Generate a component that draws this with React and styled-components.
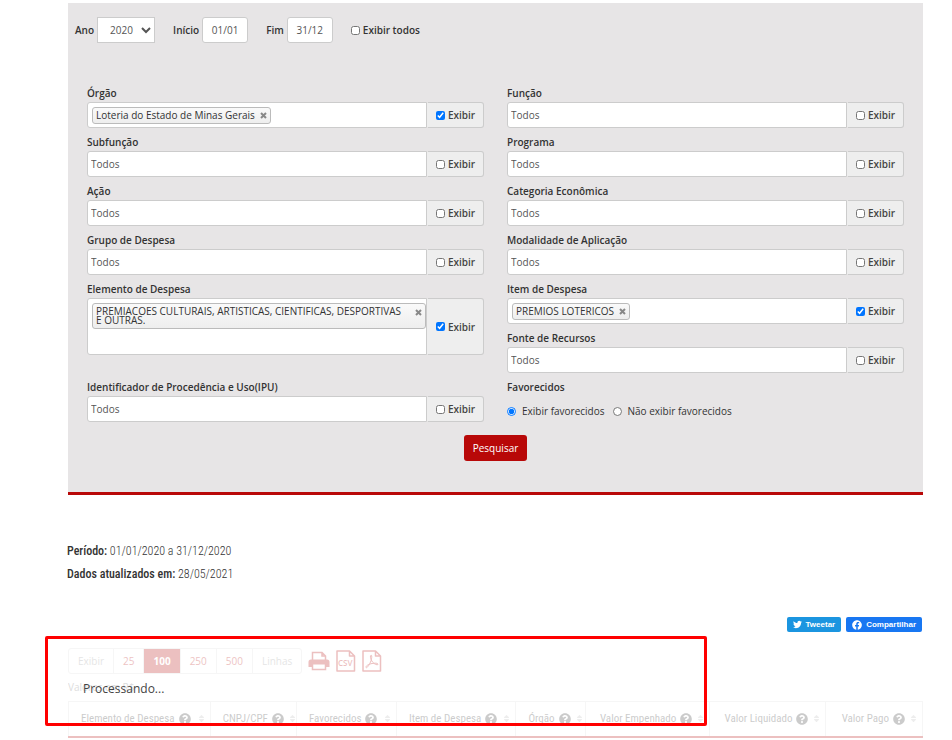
import React from "react";
import styled, { createGlobalStyle, css } from "styled-components";
import { FaQuestionCircle, FaSort, FaTwitter, FaFacebook } from "react-icons/fa";

const RED = "#b80808";

const GlobalStyle = createGlobalStyle`
  * { box-sizing: border-box; }
  body {
    margin: 0;
    background: #fff;
    color: #333;
    font-family: "Open Sans", "Noto Sans", sans-serif;
    font-size: 10px;
  }
  button, input, select { font: inherit; color: inherit; }
`;

const Page = styled.main`
  padding: 3px 29px 0 68px;
`;

const FilterPanel = styled.form`
  background: #e7e5e6;
  border-bottom: 3px solid ${RED};
  padding: 14px 19px 31px;
`;

const PeriodBar = styled.div`
  display: flex;
  align-items: center;
  gap: 18px;
  margin-left: -12px;
  height: 26px;
`;

const PeriodField = styled.label`
  display: flex;
  align-items: center;
  gap: 3px;
  font-weight: 600;
`;

const controlBox = css`
  height: 26px;
  border: 1px solid #ccc;
  background: #fff;
  font-weight: 400;
  color: #555;
`;

const YearSelect = styled.select`
  ${controlBox}
  width: 58px;
  padding: 0 0 0 8px;
`;

const DateInput = styled.input`
  ${controlBox}
  width: 46px;
  border-radius: 3px;
  padding: 0;
  text-align: center;
`;

const CheckLabel = styled.label`
  display: inline-flex;
  align-items: center;
  gap: 3px;
  font-weight: 600;
`;

const Check = styled.input`
  width: 9px;
  height: 9px;
  margin: 0;
`;

const Fields = styled.div`
  display: grid;
  grid-template-columns: 1fr 1fr;
  column-gap: 23px;
  row-gap: 5px;
  margin-top: 41px;
`;

const FieldCell = styled.div`
  min-width: 0;
  grid-row: span ${(p) => p.$rows || 1};
`;

const FieldTitle = styled.label`
  display: block;
  height: 18px;
  line-height: 18px;
  font-weight: 600;
`;

const InputGroup = styled.div`
  display: flex;
  min-height: ${(p) => (p.$tall ? 57 : 26)}px;
`;

const TokenBox = styled.div`
  flex: 1;
  min-width: 0;
  display: flex;
  align-items: flex-start;
  background: #fff;
  border: 1px solid #ccc;
  border-radius: 3px 0 0 3px;
  padding: ${(p) => (p.$tokens ? "4px 0 0 4px" : "0")};
`;

const TokenInput = styled.input`
  flex: 1;
  width: 0;
  min-width: 0;
  height: 24px;
  border: 0;
  padding: 0 3px 1px;
  outline: 0;
  background: transparent;
  &::placeholder { color: #555; opacity: 1; }
`;

const Token = styled.span`
  display: flex;
  align-items: flex-start;
  justify-content: space-between;
  gap: ${(p) => (p.$wide ? 10 : 5)}px;
  flex: ${(p) => (p.$wide ? "1" : "none")};
  border: 1px solid #bbb;
  border-radius: 3px;
  background: linear-gradient(#fafafa, #eee);
  color: #333;
  padding: ${(p) => (p.$wide ? "3px" : "2px 3px")};
  line-height: ${(p) => (p.$wide ? 9 : 11)}px;
`;

const TokenRemove = styled.button`
  border: 0;
  padding: 0;
  background: none;
  width: 7px;
  height: 11px;
  display: flex;
  align-items: center;
`;

const Addon = styled.div`
  flex: none;
  width: 57px;
  display: flex;
  align-items: center;
  justify-content: center;
  background: #eee;
  border: 1px solid #ccc;
  border-left-color: #eee;
  border-radius: 0 3px 3px 0;
  color: #444;
`;

const Radios = styled.div`
  display: flex;
  align-items: center;
  gap: 8px;
  height: 30px;
`;

const RadioLabel = styled.label`
  display: inline-flex;
  align-items: center;
  gap: 6px;
`;

const Radio = styled.input`
  width: 9px;
  height: 9px;
  margin: 0;
`;

const SearchRow = styled.div`
  display: flex;
  justify-content: center;
  margin-top: 9px;
`;

const SearchButton = styled.button`
  height: 26px;
  padding: 0 9px;
  border: 0;
  border-radius: 3px;
  background: ${RED};
  color: #fff;
`;

const Summary = styled.section`
  margin: 45px 0 0 -1px;
  font-family: "Roboto Condensed", Roboto, sans-serif;
  font-size: 12px;
  font-weight: 300;
  line-height: 23px;
`;

const SummaryLine = styled.p`
  margin: 0;
`;

const SummaryTerm = styled.strong`
  font-weight: 500;
`;

const ShareBar = styled.div`
  display: flex;
  justify-content: flex-end;
  gap: 5px;
  margin: 31px 1px 0 0;
`;

const ShareLink = styled.a`
  display: flex;
  align-items: center;
  gap: 4px;
  height: 15px;
  padding: 0 6px;
  border-radius: 2px;
  background: ${(p) => p.$color};
  color: #fff;
  font: 700 8px "Liberation Sans", sans-serif;
  text-decoration: none;
`;

const Results = styled.section`
  position: relative;
  padding-top: 16px;
`;

const Faded = styled.div`
  opacity: 0.25;
`;

const Toolbar = styled.div`
  display: flex;
  align-items: center;
  gap: 6px;
`;

const Pager = styled.div`
  display: flex;
  border: 1px solid #ddd;
  border-radius: 3px;
`;

const pagerItem = css`
  height: 24px;
  padding: 0 9px;
  border: 0;
  border-left: 1px solid #ddd;
  line-height: 24px;
`;

const PagerText = styled.span`
  ${pagerItem}
  color: #999;
  &:first-child { border-left: 0; }
`;

const PagerButton = styled.button`
  ${pagerItem}
  background: ${(p) => (p.$active ? RED : "#fff")};
  color: ${(p) => (p.$active ? "#fff" : RED)};
  font-weight: ${(p) => (p.$active ? 700 : 400)};
`;

const ExportButton = styled.button`
  display: flex;
  border: 0;
  padding: 0;
  background: none;
  color: ${RED};
`;

const Note = styled.p`
  margin: 5px 0 6px;
  line-height: 16px;
  color: #777;
`;

const Table = styled.table`
  width: 100%;
  table-layout: fixed;
  border-collapse: collapse;
  font-family: "Roboto Condensed", Roboto, sans-serif;
  font-size: 11px;
`;

const Col = styled.col`
  width: ${(p) => p.$share}%;
`;

const HeadCell = styled.th`
  height: 35px;
  padding: 0 4px 0 12px;
  border: 1px solid #ddd;
  border-bottom: 2px solid ${RED};
  font-weight: 400;
  color: #333;
  white-space: nowrap;
`;

const HeadContent = styled.span`
  display: flex;
  align-items: center;
  gap: 4px;
  justify-content: ${(p) => (p.$end ? "flex-end" : "flex-start")};
`;

const HelpIcon = styled(FaQuestionCircle)`
  flex: none;
`;

const SortMark = styled(FaSort)`
  margin-left: ${(p) => (p.$end ? "0" : "auto")};
  color: #bbb;
  flex: none;
`;

const Processing = styled.div`
  position: absolute;
  left: 15px;
  top: 49px;
  font-size: 12px;
  line-height: 16px;
  color: #444;
`;

const Highlight = styled.div`
  position: absolute;
  left: -23px;
  top: 4px;
  width: 662px;
  height: 90px;
  border: 3px solid #f00;
  border-radius: 2px;
  pointer-events: none;
`;

function CrossIcon() {
  return (
    <svg width="7" height="7" viewBox="0 0 7 7" aria-hidden="true">
      <path d="M1 1L6 6M6 1L1 6" stroke="#888" strokeWidth="2" />
    </svg>
  );
}

function PrinterIcon() {
  return (
    <svg width="22" height="20" viewBox="0 0 22 20" aria-hidden="true">
      <path d="M4.500 9V1.500H14L17.500 5V9M14 1.500V5H17.500" fill="none" stroke="currentColor" strokeWidth="1.500" />
      <path d="M3 8.500H19Q21.500 8.500 21.500 11V16H18V13.500H4V16H.5V11Q.5 8.500 3 8.500Z" fill="currentColor" />
      <path d="M4.500 13V18.500H17.500V13" fill="none" stroke="currentColor" strokeWidth="1.500" />
    </svg>
  );
}

function SheetIcon({ children }) {
  return (
    <svg width="20" height="22" viewBox="0 0 20 22" aria-hidden="true">
      <path d="M1 1H13.500L18.500 6V21H1ZM13.500 1V6H18.500" fill="none" stroke="currentColor" strokeWidth="1.500" strokeLinejoin="round" />
      {children}
    </svg>
  );
}

const SheetText = styled.text`
  font: 600 8px "Open Sans", sans-serif;
  fill: currentColor;
`;

function Field({ id, title, token, tall, rows }) {
  return (
    <FieldCell $rows={rows}>
      <FieldTitle htmlFor={id}>{title}</FieldTitle>
      <InputGroup $tall={tall}>
        <TokenBox $tokens={Boolean(token)}>
          {token ? (
            <Token $wide={tall}>
              {token}
              <TokenRemove id={id} type="button" aria-label={`Remover ${token}`}>
                <CrossIcon />
              </TokenRemove>
            </Token>
          ) : (
            <TokenInput id={id} type="text" placeholder="Todos" />
          )}
        </TokenBox>
        <Addon>
          <CheckLabel>
            <Check type="checkbox" defaultChecked={Boolean(token)} />
            Exibir
          </CheckLabel>
        </Addon>
      </InputGroup>
    </FieldCell>
  );
}

const fields = [
  { id: "orgao", title: "Órgão", token: "Loteria do Estado de Minas Gerais" },
  { id: "funcao", title: "Função" },
  { id: "subfuncao", title: "Subfunção" },
  { id: "programa", title: "Programa" },
  { id: "acao", title: "Ação" },
  { id: "categoria", title: "Categoria Econômica" },
  { id: "grupo", title: "Grupo de Despesa" },
  { id: "modalidade", title: "Modalidade de Aplicação" },
  {
    id: "elemento",
    title: "Elemento de Despesa",
    token: "PREMIACOES CULTURAIS, ARTISTICAS, CIENTIFICAS, DESPORTIVAS E OUTRAS.",
    tall: true,
    rows: 2,
  },
  { id: "item", title: "Item de Despesa", token: "PREMIOS LOTERICOS" },
  { id: "fonte", title: "Fonte de Recursos" },
  { id: "ipu", title: "Identificador de Procedência e Uso(IPU)" },
];

const columns = [
  { title: "Elemento de Despesa", share: 16.6 },
  { title: "CNPJ/CPF", share: 10.1 },
  { title: "Favorecidos", share: 11.7 },
  { title: "Item de Despesa", share: 14 },
  { title: "Órgão", share: 8.2 },
  { title: "Valor Empenhado", share: 14.5, end: true },
  { title: "Valor Liquidado", share: 13.6, end: true },
  { title: "Valor Pago", share: 11.3, end: true },
];

export default function App() {
  return (
    <>
      <GlobalStyle />
      <Page>
        <FilterPanel onSubmit={(e) => e.preventDefault()}>
          <PeriodBar>
            <PeriodField>
              Ano
              <YearSelect defaultValue="2020">
                <option>2020</option>
              </YearSelect>
            </PeriodField>
            <PeriodField>
              Início
              <DateInput defaultValue="01/01" />
            </PeriodField>
            <PeriodField>
              Fim
              <DateInput defaultValue="31/12" />
            </PeriodField>
            <CheckLabel>
              <Check type="checkbox" />
              Exibir todos
            </CheckLabel>
          </PeriodBar>
          <Fields>
            {fields.map((f) => (
              <Field key={f.id} {...f} />
            ))}
            <FieldCell role="radiogroup" aria-labelledby="favorecidos">
              <FieldTitle as="div" id="favorecidos">Favorecidos</FieldTitle>
              <Radios>
                <RadioLabel>
                  <Radio type="radio" name="favorecidos" defaultChecked />
                  Exibir favorecidos
                </RadioLabel>
                <RadioLabel>
                  <Radio type="radio" name="favorecidos" />
                  Não exibir favorecidos
                </RadioLabel>
              </Radios>
            </FieldCell>
          </Fields>
          <SearchRow>
            <SearchButton type="submit">Pesquisar</SearchButton>
          </SearchRow>
        </FilterPanel>

        <Summary>
          <SummaryLine><SummaryTerm>Período:</SummaryTerm> 01/01/2020 a 31/12/2020</SummaryLine>
          <SummaryLine><SummaryTerm>Dados atualizados em:</SummaryTerm> 28/05/2021</SummaryLine>
        </Summary>

        <ShareBar>
          <ShareLink href="#tweetar" $color="#1b95e0"><FaTwitter size={9} />Tweetar</ShareLink>
          <ShareLink href="#compartilhar" $color="#1877f2"><FaFacebook size={10} />Compartilhar</ShareLink>
        </ShareBar>

        <Results>
          <Faded>
            <Toolbar>
              <Pager>
                <PagerText>Exibir</PagerText>
                <PagerButton type="button">25</PagerButton>
                <PagerButton type="button" $active>100</PagerButton>
                <PagerButton type="button">250</PagerButton>
                <PagerButton type="button">500</PagerButton>
                <PagerText>Linhas</PagerText>
              </Pager>
              <ExportButton type="button" aria-label="Imprimir"><PrinterIcon /></ExportButton>
              <ExportButton type="button" aria-label="Exportar CSV">
                <SheetIcon><SheetText x="2" y="16">CSV</SheetText></SheetIcon>
              </ExportButton>
              <ExportButton type="button" aria-label="Exportar PDF">
                <SheetIcon>
                  <path
                    d="M4 17.500C3.500 15.500 7.500 14 10 13.500C13 13 16 13 16 14.200C16 15.500 12.500 14.500 10.500 12C8.500 9.500 7.800 5.500 9 5.200C10.300 5 9.800 9 8.500 12C7 15.500 4.800 18.500 4 17.500Z"
                    fill="none"
                    stroke="currentColor"
                  />
                </SheetIcon>
              </ExportButton>
            </Toolbar>
            <Note>Valores em R$</Note>
            <Table>
              <colgroup>
                {columns.map((c) => <Col key={c.title} $share={c.share} />)}
              </colgroup>
              <thead>
                <tr>
                  {columns.map((c) => (
                    <HeadCell key={c.title} scope="col">
                      <HeadContent $end={c.end}>
                        {c.title}
                        <HelpIcon size={12} />
                        <SortMark size={9} $end={c.end} />
                      </HeadContent>
                    </HeadCell>
                  ))}
                </tr>
              </thead>
            </Table>
          </Faded>
          <Processing role="status">Processando...</Processing>
          <Highlight />
        </Results>
      </Page>
    </>
  );
}
